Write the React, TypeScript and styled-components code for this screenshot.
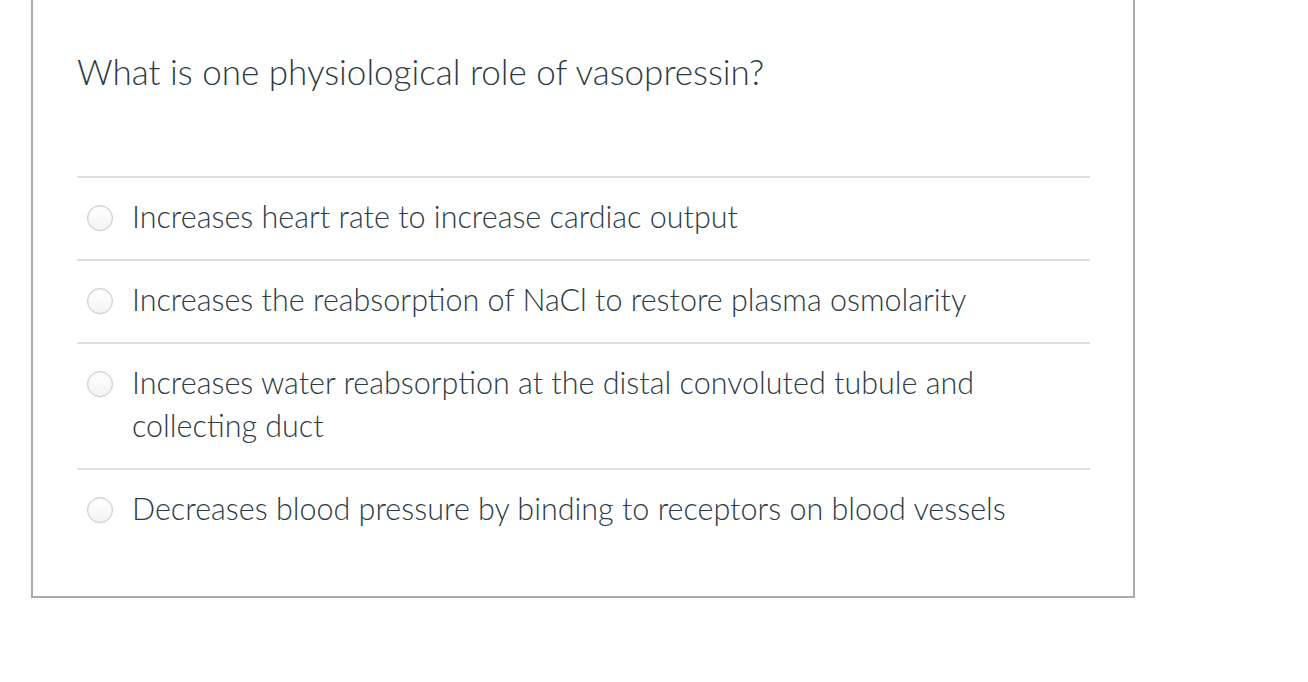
import React from "react";
import styled, { createGlobalStyle } from "styled-components";

const Global = createGlobalStyle`
  html, body { margin: 0; padding: 0; background: #ffffff; }
  body { font-family: Lato, "Noto Sans", sans-serif; color: #2d3b45; overflow: hidden; }
`;

const Page = styled.div`
  padding: 0 0 0 31px;
  width: 1104px;
`;

const Card = styled.div`
  margin-top: -11px;
  border: 2px solid #ababab;
  padding: 58px 43px 45px 44px;
  background: #fff;
`;

const Question = styled.div`
  font-size: 35px;
  line-height: 44px;
  font-weight: 300;
  color: #2d3b45;
  margin-bottom: 83px;
`;

const List = styled.div`
  display: flex;
  flex-direction: column;
`;

const Row = styled.label`
  display: flex;
  align-items: flex-start;
  border-top: 2px solid #dfdfdf;
  padding: 17px 0 21px 10px;
`;

const Radio = styled.span`
  flex: 0 0 auto;
  width: 24px;
  height: 24px;
  margin-top: 10px;
  margin-right: 19px;
  border-radius: 50%;
  border: 1px solid #c8c8c8;
  background: linear-gradient(#ffffff, #f3f3f3);
  box-shadow: inset 0 1px 2px rgba(0, 0, 0, 0.07), 0 1px 0 rgba(0,0,0,0.04);
`;

const AnswerText = styled.span`
  font-size: 30.5px;
  line-height: 43px;
  font-weight: 300;
  color: #2d3b45;
`;

const answers = [
  "Increases heart rate to increase cardiac output",
  "Increases the reabsorption of NaCl to restore plasma osmolarity",
  "Increases water reabsorption at the distal convoluted tubule and collecting duct",
  "Decreases blood pressure by binding to receptors on blood vessels",
];

export default function App() {
  return (
    <Page>
      <Global />
      <Card>
        <Question>What is one physiological role of vasopressin?</Question>
        <List>
          {answers.map((a) => (
            <Row key={a}>
              <Radio />
              <AnswerText>{a}</AnswerText>
            </Row>
          ))}
        </List>
      </Card>
    </Page>
  );
}
